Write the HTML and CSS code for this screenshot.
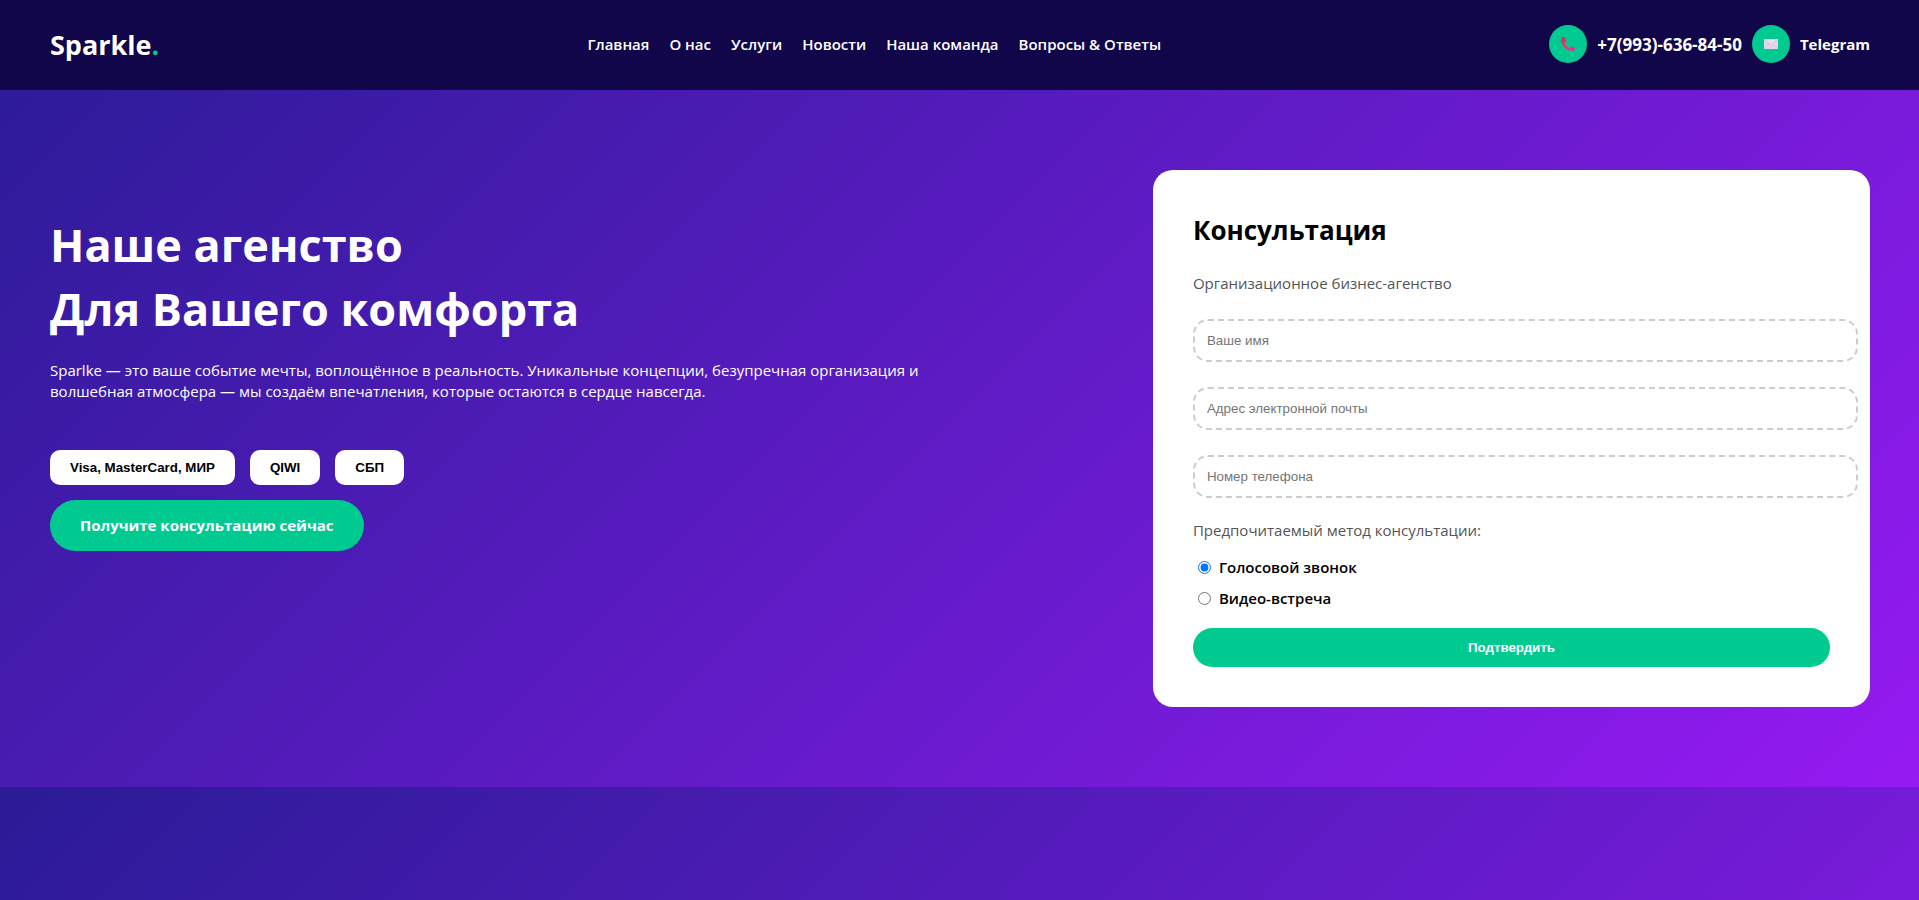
FILE: index.html
```html
<!DOCTYPE html>
<html lang="ru">
<head>
<meta charset="UTF-8">
<meta name="viewport" content="width=device-width, initial-scale=1">
<title>Sparkle</title>
<link rel="stylesheet" href="styles.css">
</head>
<body>
<header class="header">
  <a class="logo" href="#">Sparkle<span class="logo-dot">.</span></a>
  <nav class="nav">
    <a href="#">Главная</a>
    <a href="#">О нас</a>
    <a href="#">Услуги</a>
    <a href="#">Новости</a>
    <a href="#">Наша команда</a>
    <a href="#">Вопросы &amp; Ответы</a>
  </nav>
  <div class="contacts">
    <a class="contact contact-phone" href="tel:+79936368450">
      <span class="contact-icon">
        <svg width="16" height="16" viewBox="0 0 16 16" aria-hidden="true">
          <defs>
            <linearGradient id="phone" x1="0" y1="0" x2="1" y2="1">
              <stop offset="0" stop-color="#c42f5c"/>
              <stop offset="0.5" stop-color="#f03a62"/>
              <stop offset="1" stop-color="#cf35b4"/>
            </linearGradient>
          </defs>
          <path fill="url(#phone)" d="M2.200 1.300C1 2.200.7 3.700 1.200 5.500c.7 2.600 2.200 4.900 4.300 6.700 2 1.700 4.300 2.700 6.600 2.800 1.600 0 2.700-.6 3-1.700.1-.5 0-.9-.4-1.200l-2.500-1.600c-.5-.3-1-.2-1.400.2l-.9 1c-.3.3-.7.3-1 .1-1.800-1-3.200-2.500-4-4.300-.1-.4 0-.7.300-.9l.9-.6c.5-.3.6-.8.400-1.300L5.300 1.900c-.2-.6-.7-.9-1.300-.9-.7 0-1.300 0-1.800.3z"/>
        </svg>
      </span>
      +7(993)-636-84-50
    </a>
    <a class="contact" href="#">
      <span class="contact-icon">
        <svg width="16" height="16" viewBox="0 0 16 16" aria-hidden="true">
          <rect x="1" y="3" width="14" height="10" fill="#e2d6ec"/>
          <path d="M1 12.700 6.300 7.700M15 12.700 9.700 7.700" fill="none" stroke="#d3c3e2" stroke-width="0.700"/>
          <path d="M1 3.200 7.300 8.700q.7.500 1.400 0L15 3.200" fill="#e8deef" stroke="#cdbddc" stroke-width="0.700"/>
        </svg>
      </span>
      Telegram
    </a>
  </div>
</header>
<main class="hero">
  <section class="intro">
    <h1 class="title">Наше агенство<br>Для Вашего комфорта</h1>
    <p class="lead">Sparlke — это ваше событие мечты, воплощённое в реальность. Уникальные концепции, безупречная организация и волшебная атмосфера — мы создаём впечатления, которые остаются в сердце навсегда.</p>
    <div class="payments">
      <button class="pay" type="button">Visa, MasterCard, МИР</button>
      <button class="pay" type="button">QIWI</button>
      <button class="pay" type="button">СБП</button>
    </div>
    <a class="cta" href="#form">Получите консультацию сейчас</a>
  </section>
  <form class="card" id="form">
    <h2 class="card-title">Консультация</h2>
    <p class="card-text">Организационное бизнес-агенство</p>
    <input class="field" type="text" placeholder="Ваше имя" aria-label="Ваше имя">
    <input class="field" type="email" placeholder="Адрес электронной почты" aria-label="Адрес электронной почты">
    <input class="field" type="tel" placeholder="Номер телефона" aria-label="Номер телефона">
    <p class="card-text method-title" id="method">Предпочитаемый метод консультации:</p>
    <div class="methods" role="radiogroup" aria-labelledby="method">
      <label class="method"><input type="radio" name="method" checked>Голосовой звонок</label>
      <label class="method"><input type="radio" name="method">Видео-встреча</label>
    </div>
    <button class="submit" type="submit">Подтвердить</button>
  </form>
</main>
</body>
</html>
```

FILE: styles.css
```css
body {
  margin: 0;
  font-family: "Segoe UI", "Open Sans", "Noto Sans", sans-serif;
  font-size: 15px;
  line-height: 21px;
  color: #fff;
  background: linear-gradient(135deg, #2a1b96, #5e1bc4, #961af3);
}

a {
  color: inherit;
  text-decoration: none;
}

.header {
  display: flex;
  justify-content: space-between;
  align-items: flex-start;
  padding: 25px 49px 25px 50px;
  background: #100649;
}

.logo {
  font-size: 27px;
  line-height: 40px;
  font-weight: 700;
}

.logo-dot {
  color: #00ca90;
}

.nav {
  display: flex;
  gap: 20px;
  padding-left: 40px;
  line-height: 38px;
  font-weight: 600;
}

.contacts {
  display: flex;
  gap: 10px;
  font-weight: 700;
}

.contact {
  display: flex;
  align-items: center;
  gap: 10px;
}

.contact-phone {
  font-size: 17px;
}

.contact-icon {
  display: flex;
  align-items: center;
  justify-content: center;
  width: 38px;
  height: 38px;
  border-radius: 50%;
  background: #00ca90;
}

.hero {
  display: flex;
  justify-content: space-between;
  align-items: flex-start;
  padding: 80px 49px 80px 50px;
}

.intro {
  width: 50%;
  padding-top: 43px;
}

.title {
  margin: 0 0 19px;
  font-size: 45px;
  line-height: 64px;
}

.lead {
  margin: 0 0 48px;
}

.payments {
  display: flex;
  gap: 15px;
  margin-bottom: 15px;
}

.pay,
.submit,
.field {
  font-family: "Liberation Sans", Arial, sans-serif;
  line-height: 15px;
}

.pay,
.submit {
  border: 0;
  padding: 10px 20px;
  font-weight: 700;
}

.pay {
  border-radius: 10px;
  color: #000;
  background: #fff;
}

.cta {
  display: inline-block;
  padding: 15px 30px;
  border-radius: 30px;
  font-weight: 700;
  background: #00ca90;
}

.card {
  box-sizing: border-box;
  width: 39.4%;
  padding: 40px;
  border-radius: 20px;
  color: #000;
  background: #fff;
}

.card-title {
  margin: 0 0 23px;
  font-size: 26px;
  line-height: 40px;
}

.card-text {
  margin: 0 0 25px;
  color: #555;
}

.field {
  display: block;
  width: 100%;
  height: 15px;
  margin: 0 0 25px;
  padding: 12px;
  border: 2px dashed #ccc;
  border-radius: 15px;
}

.field::placeholder {
  color: #757575;
}

.method-title {
  margin: -3px 0 16px;
}

.methods {
  display: grid;
  gap: 10px;
  margin-bottom: 19px;
  font-weight: 600;
}

.method {
  display: flex;
  align-items: center;
}

.method input {
  width: 13px;
  height: 13px;
  margin: 0 8px 0 5px;
}

.submit {
  display: block;
  width: 100%;
  padding: 12px;
  border-radius: 20px;
  color: #fff;
  background: #00ca90;
}
```
